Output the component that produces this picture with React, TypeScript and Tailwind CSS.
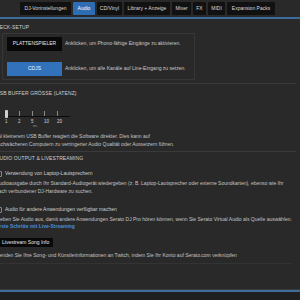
const TABS = [
  { label: "DJ-Vorinstellungen", w: "w-[51px]" },
  { label: "Audio", w: "w-[22px]", active: true },
  { label: "CD/Vinyl", w: "w-[25px]" },
  { label: "Library + Anzeige", w: "w-[46px]" },
  { label: "Mixer", w: "w-[19px]" },
  { label: "FX", w: "w-[13px]" },
  { label: "MIDI", w: "w-[17px]" },
  { label: "Expansion Packs", w: "w-[48px]" },
];

const TICKS = ["1", "2", "5", "10", "20"];

function Heading({ children }: { children: string }) {
  return (
    <div className="h-[7px] leading-[7px] text-[5px] tracking-[0.1px] text-[#cfcfcf] uppercase">
      {children}
    </div>
  );
}

function Check({ label }: { label: string }) {
  return (
    <div className="flex items-center gap-[3px] h-[7px]">
      <div className="w-[6px] h-[6px] border border-[#8a8a8a] rounded-[1px]" />
      <span className="text-[5px] leading-[7px] text-[#cfcfcf]">{label}</span>
    </div>
  );
}

export default function App() {
  return (
    <div
      className="w-[300px] h-[300px] overflow-hidden bg-[#292929] flex flex-col"
      style={{ fontFamily: '"Liberation Sans", Arial, sans-serif' }}
    >
      <div className="flex gap-[2px] ml-[20px] mt-[2px] h-[13px]">
        {TABS.map((t) => (
          <div
            key={t.label}
            className={`${t.w} h-[13px] flex items-center justify-center rounded-[1px] text-[5px] whitespace-nowrap ${
              t.active ? "bg-[#2e6db3] text-white" : "bg-[#111111] text-[#dadada]"
            }`}
          >
            {t.label}
          </div>
        ))}
      </div>
      <div className="mt-[2px] h-[2px] bg-[#3c6c9c]" />

      <div className="ml-[-4px] w-[300px] flex flex-col">
        <div className="mt-[5px]">
          <Heading>DECK-SETUP</Heading>
        </div>
        <div className="mt-[2px] ml-[6px] w-[193px] h-[47px] border border-[#363636] pt-[3px] pl-[4px] flex flex-col gap-[11px]">
          <div className="flex items-center gap-[3px]">
            <div className="w-[55px] h-[14px] bg-[#080808] flex items-center justify-center text-[5px] text-[#e6e6e6]">
              PLATTENSPIELER
            </div>
            <span className="text-[5px] text-[#c8c8c8]">
              Anklicken, um Phono-fähige Eingänge zu aktivieren.
            </span>
          </div>
          <div className="flex items-center gap-[3px]">
            <div className="w-[55px] h-[14px] bg-[#3272bb] flex items-center justify-center text-[5px] text-[#eef4ff]">
              CDJS
            </div>
            <span className="text-[5px] text-[#c8c8c8]">
              Anklicken, um alle Kanäle auf Line-Eingang zu setzen.
            </span>
          </div>
        </div>

        <div className="mt-[3px] ml-[4px] w-[296px] h-px bg-[#3a3a3a]" />
        <div className="mt-[6px]">
          <Heading>USB BUFFER GRÖSSE (LATENZ)</Heading>
        </div>

        <div className="mt-[14px] ml-[10px] w-[64px] flex flex-col">
          <div className="relative h-[8px]">
            <div className="absolute left-0 right-0 top-[5px] h-[1px] bg-[#0c0c0c]" />
            <div className="flex h-[5px]">
              {TICKS.map((t) => (
                <div key={t} className="w-[14px] flex">
                  <div className="w-px h-[5px] bg-[#8a8a8a]" />
                </div>
              ))}
            </div>
            <div className="absolute left-[-1px] top-[-1px] w-[3px] h-[8px] rounded-[1px] bg-[#cfcfcf]" />
          </div>
          <div className="flex ml-[-1px]">
            {TICKS.map((t) => (
              <div key={t} className="w-[14px] text-[4.5px] leading-[5px] text-[#d4d4d4]">
                {t}
              </div>
            ))}
          </div>
          <div className="ml-[27px] text-[3px] leading-[4px] text-[#9a9a9a]">ms</div>
        </div>

        <div className="mt-[5px] ml-[2px] text-[5px] leading-[7.5px] text-[#c4c4c4] whitespace-nowrap">
          <div>al kleinerem USB Buffer reagiert die Software direkter. Dies kann auf</div>
          <div>schwächeren Computern zu verringerter Audio Qualität oder Aussetzern führen.</div>
        </div>

        <div className="mt-[3px] ml-[4px] w-[296px] h-px bg-[#3a3a3a]" />
        <div className="mt-[3px]">
          <Heading>AUDIO OUTPUT & LIVESTREAMING</Heading>
        </div>

        <div className="mt-[8px]">
          <Check label="Verwendung von Laptop-Lautsprechern" />
        </div>
        <div className="mt-[3px] text-[5px] leading-[7.5px] text-[#c4c4c4] whitespace-nowrap">
          <div>Audioausgabe durch Ihr Standard-Audiogerät wiedergeben (z. B. Laptop-Lautsprecher oder externe Soundkarten), ebenso wie Ihr</div>
          <div>nach verbundener DJ-Hardware zu suchen.</div>
        </div>

        <div className="mt-[11px]">
          <Check label="Audio für andere Anwendungen verfügbar machen" />
        </div>
        <div className="mt-[3px] text-[5px] leading-[7px] text-[#c4c4c4] whitespace-nowrap">
          <div>Geben Sie Audio aus, damit andere Anwendungen Serato DJ Pro hören können, wenn Sie Serato Virtual Audio als Quelle auswählen.</div>
          <div className="text-[#4b8ed4] font-bold">Erste Schritte mit Live-Streaming</div>
        </div>

        <div className="mt-[8px] ml-[4px] w-[53px] h-[9px] bg-[#080808] flex items-center pl-[2px] text-[5px] text-[#e6e6e6] whitespace-nowrap">
          Livestream Song Info
        </div>
        <div className="mt-[5px] text-[5px] leading-[7px] text-[#c4c4c4] whitespace-nowrap">
          Senden Sie Ihre Song- und Künstlerinformationen an Twitch, indem Sie Ihr Konto auf Serato.com verknüpfen
        </div>
        <div className="mt-[4px] ml-[4px] w-[292px] h-px bg-[#333333]" />
      </div>

      <div className="mt-auto h-[11px] flex flex-col">
        <div className="h-[1px] bg-[#3a3a3a]" />
        <div className="h-[2px] bg-[#3f6c98]" />
        <div className="flex-1 bg-[#1f1f1f]" />
      </div>
    </div>
  );
}
